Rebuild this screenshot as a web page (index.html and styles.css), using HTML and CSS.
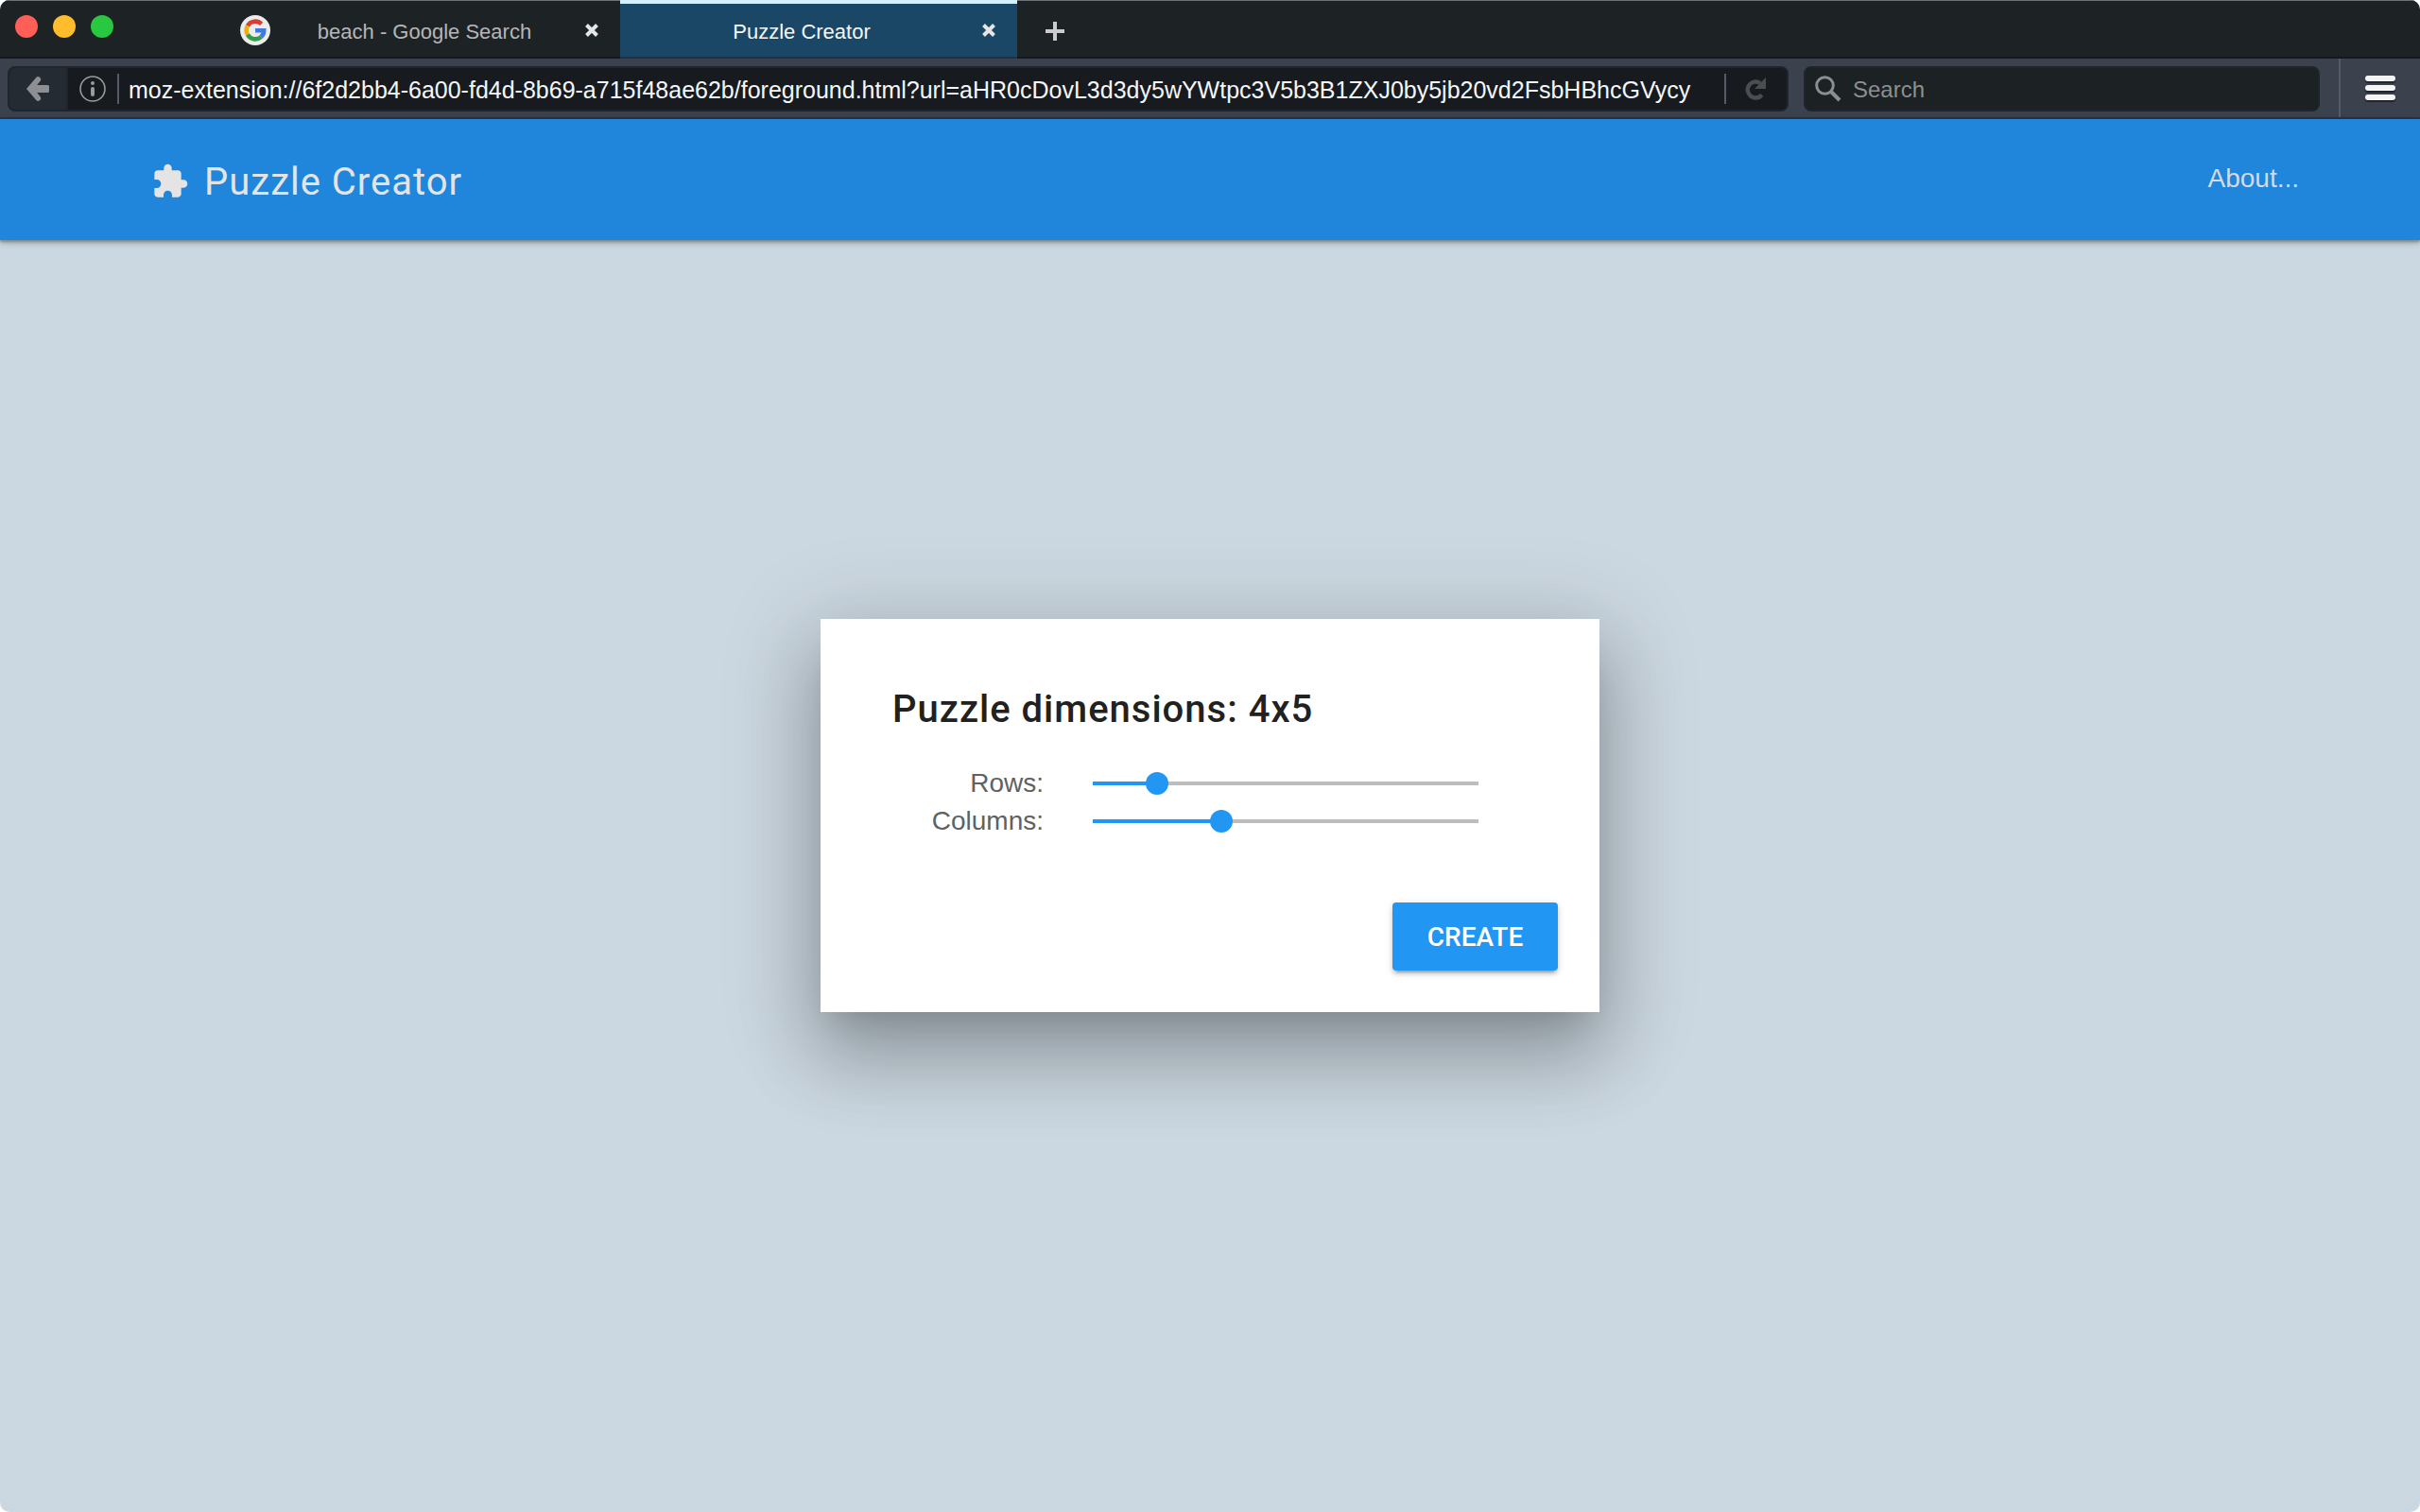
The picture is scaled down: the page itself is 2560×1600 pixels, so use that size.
FILE: index.html
```html
<!DOCTYPE html>
<html lang="en">
<head>
<meta charset="utf-8">
<title>Puzzle Creator</title>
<link rel="stylesheet" href="styles.css">
</head>
<body>
<div class="window">
  <div class="tabbar">
    <div class="lights">
      <button class="light red" aria-label="Close window"></button>
      <button class="light yellow" aria-label="Minimize window"></button>
      <button class="light green" aria-label="Zoom window"></button>
    </div>
    <div class="tab">
      <svg class="favicon" viewBox="0 0 32 32"><circle cx="16" cy="16" r="16" fill="#ececec"/><g fill="none" stroke-width="4.6"><path d="M22.6 9.4A9.4 9.4 0 0 0 7.9 11.3" stroke="#d93f31"/><path d="M7.9 11.3A9.4 9.4 0 0 0 7.9 20.7" stroke="#eab10c"/><path d="M7.9 20.7A9.4 9.4 0 0 0 22 23.2" stroke="#319d4d"/><path d="M22 23.2A9.4 9.4 0 0 0 25.2 16.2H16" stroke="#3f7ae0"/></g></svg>
      <span class="tab-title">beach - Google Search</span>
      <button class="close" aria-label="Close tab"><svg viewBox="0 0 16 16"><path d="M2.500 2.500L13.500 13.500M13.500 2.500L2.500 13.500" fill="none" stroke="currentColor" stroke-width="4"/></svg></button>
    </div>
    <div class="tab active">
      <span class="tab-title">Puzzle Creator</span>
      <button class="close" aria-label="Close tab"><svg viewBox="0 0 16 16"><path d="M2.500 2.500L13.500 13.500M13.500 2.500L2.500 13.500" fill="none" stroke="currentColor" stroke-width="4"/></svg></button>
    </div>
    <button class="newtab" aria-label="New tab"><svg viewBox="0 0 20 20"><path d="M10 0V20M0 10H20" stroke="#c9cbcc" stroke-width="4"/></svg></button>
  </div>
  <div class="toolbar">
    <div class="urlbar">
      <button class="back" aria-label="Back"><svg viewBox="0 0 26 28"><path d="M1 14L11.500 1.800Q13 0.400 15 1.800Q17.200 3.600 15.800 5.600L12.200 10H23.500Q25 10 25 11.500V16.500Q25 18 23.500 18H12.200L15.800 22.400Q17.200 24.400 15 26.200Q13 27.600 11.500 26.200Z" fill="#8d8f93"/></svg></button>
      <svg class="info" viewBox="0 0 28 28"><circle cx="14" cy="14" r="13" fill="none" stroke="#9a9a9a" stroke-width="1.600"/><circle cx="14" cy="8" r="2" fill="#9a9a9a"/><path d="M14 14V20" stroke="#9a9a9a" stroke-width="4" stroke-linecap="round"/></svg>
      <span class="divider"></span>
      <input class="url" type="text" aria-label="Address" value="moz-extension://6f2d2bb4-6a00-fd4d-8b69-a715f48ae62b/foreground.html?url=aHR0cDovL3d3dy5wYWtpc3V5b3B1ZXJ0by5jb20vd2FsbHBhcGVycy">
      <span class="divider"></span>
      <button class="reload" aria-label="Reload"><svg viewBox="0 0 22 24"><path d="M16 6A8.500 8.500 0 1 0 17.800 18.500" fill="none" stroke="#4b4d4f" stroke-width="4.400"/><path d="M22 0V12H10Z" fill="#4b4d4f"/></svg></button>
    </div>
    <div class="searchbar">
      <svg class="glass" viewBox="0 0 28 28"><circle cx="10.500" cy="10.500" r="8.800" fill="none" stroke="#8c8f90" stroke-width="3"/><path d="M17 17L26 26" stroke="#8c8f90" stroke-width="4"/></svg>
      <input class="search" type="text" aria-label="Search" placeholder="Search">
    </div>
    <button class="menu" aria-label="Open menu"><i></i><i></i><i></i></button>
  </div>
  <header class="header">
    <h1 class="brand"><svg viewBox="0 0 24 24"><path fill="#e4e4e4" d="M20.500 11H19V7c0-1.100-.9-2-2-2h-4V3.500C13 2.120 11.880 1 10.500 1S8 2.120 8 3.500V5H4c-1.100 0-1.990.9-1.990 2v3.800H3.500c1.490 0 2.700 1.210 2.700 2.700s-1.210 2.700-2.700 2.700H2V20c0 1.100.9 2 2 2h3.800v-1.500c0-1.490 1.210-2.700 2.700-2.700 1.490 0 2.700 1.210 2.700 2.700V22H17c1.100 0 2-.9 2-2v-4h1.500c1.380 0 2.500-1.120 2.500-2.500S21.880 11 20.500 11z"/></svg>Puzzle Creator</h1>
    <a class="about" href="#about">About...</a>
  </header>
  <main class="stage">
    <form class="dialog">
      <h2 class="dialog-title">Puzzle dimensions: 4x5</h2>
      <div class="fields">
        <label for="rows">Rows:</label>
        <input class="range" id="rows" type="range" min="2" max="14" value="4">
        <label for="columns">Columns:</label>
        <input class="range range-columns" id="columns" type="range" min="2" max="11" value="5">
      </div>
      <div class="actions"><button class="create" type="button">CREATE</button></div>
    </form>
  </main>
</div>
</body>
</html>
```
FILE: styles.css
```css
* { box-sizing: border-box; }
body { margin: 0; background: #fff; font-family: "Liberation Sans", Arial, sans-serif; }
button { padding: 0; border: 0; background: none; color: inherit; font: inherit; }
input { margin: 0; padding: 0; border: 0; outline: 0; background: none; font: inherit; }
svg { display: block; }

.window { display: flex; flex-direction: column; min-height: 100vh; border-radius: 10px; overflow: hidden; background: #ccd8e1; }

.tabbar { display: flex; height: 62px; background: #1d2225; box-shadow: inset 0 1px #6c7374, inset 0 -2px #15191c; }
.lights { display: flex; gap: 16px; width: 236px; padding: 16px; }
.light { width: 24px; height: 24px; border-radius: 50%; }
.red { background: #ff5f57; }
.yellow { background: #ffbd2e; }
.green { background: #28c940; }
.tab { display: grid; grid-template-columns: 32px 1fr 16px; align-items: center; width: 420px; padding: 4px 22px 2px 18px; color: #b5b6b9; font-size: 22px; text-align: center; }
.favicon { width: 32px; height: 32px; }
.tab-title { padding: 4px 6px 0 0; }
.close { width: 16px; height: 16px; color: #e6e6e6; }
.active { grid-template-columns: 1fr 16px; padding-left: 8px; background: #1a4766; box-shadow: inset 0 4px #d2f1fd, inset 0 -2px #16354d; color: #f5f7fa; }
.newtab { align-self: center; width: 20px; height: 20px; margin: 4px 30px 0; }

.toolbar { display: flex; height: 64px; padding: 8px 0 8px 8px; background: #3b424d; box-shadow: inset 0 -2px #2c323c; }
.urlbar, .searchbar { display: flex; align-items: center; height: 48px; border: 2px solid #20252b; border-radius: 8px; background: #171b1f; overflow: hidden; }
.urlbar { flex: 1; }
.back { display: grid; place-items: center; width: 62px; height: 100%; border-right: 2px solid #20252b; background: #252b33; }
.back svg { width: 26px; height: 28px; }
.info { width: 28px; height: 28px; margin: 0 12px; }
.divider { width: 2px; height: 32px; background: #555b66; }
.url { flex: 1; min-width: 0; height: 44px; padding: 2px 0 0 10px; color: #f5f7fa; font-size: 25px; }
.reload { width: 22px; height: 24px; margin: 0 22px 0 20px; }
.searchbar { width: 546px; margin: 0 20px 0 16px; padding-left: 10px; background: #1c2124; }
.glass { width: 28px; height: 28px; }
.search { flex: 1; height: 44px; padding: 2px 0 0 12px; color: #fff; font-size: 24px; }
.search::placeholder { color: #8c8f90; opacity: 1; }
.menu { display: flex; flex-direction: column; align-items: center; justify-content: center; gap: 4px; width: 86px; height: 62px; margin-top: -8px; border-left: 2px solid #555b66; }
.menu i { width: 32px; height: 6px; border-radius: 3px; background: #f4f4f5; box-shadow: 0 2px 1px #20252b; }

.header { display: flex; align-items: center; justify-content: space-between; height: 128px; padding: 0 128px 0 160px; background: #1f86db; box-shadow: 0 4px 4px rgba(0, 0, 0, .14), 0 2px 2px rgba(0, 0, 0, .2), 0 2px 10px rgba(0, 0, 0, .12); color: #e4e4e4; }
.brand { display: flex; align-items: center; gap: 16px; margin: 0; padding-top: 4px; font: 400 40px "Roboto", sans-serif; letter-spacing: 1px; }
.brand svg { width: 40px; height: 40px; }
.about { padding-bottom: 2px; color: #d2dbe6; font-size: 28px; text-decoration: none; }

.stage { flex: 1; display: flex; align-items: center; justify-content: center; padding-bottom: 128px; }
.dialog { width: 824px; padding: 64px 44px 44px 76px; background: #fff; box-shadow: 0 18px 92px 16px rgba(0, 0, 0, .14), 0 22px 30px -14px rgba(0, 0, 0, .12), 0 48px 76px 6px rgba(0, 0, 0, .2); }
.dialog-title { margin: 0; color: #212121; font: 500 40px/64px "Roboto", sans-serif; letter-spacing: 1px; }
.fields { display: grid; grid-template-columns: 160px 408px; column-gap: 52px; align-items: center; margin-top: 26px; color: #616161; font-size: 28px; line-height: 40px; text-align: right; }
/* The thumb's centre travels the full length of the track. */
.range { width: calc(100% + 24px); height: 24px; margin: 0 -12px; appearance: none; background: linear-gradient(to right, #2196f3 17%, #bdbdbd 17%) center / calc(100% - 24px) 4px no-repeat; }
.range-columns { background-image: linear-gradient(to right, #2196f3 33%, #bdbdbd 33%); }
.range::-webkit-slider-thumb { appearance: none; width: 24px; height: 24px; border-radius: 50%; background: #2196f3; }
.actions { display: flex; justify-content: flex-end; margin-top: 66px; }
.create { width: 175px; height: 72px; border-radius: 4px; background: #2196f3; box-shadow: 0 4px 4px rgba(0, 0, 0, .14), 0 6px 2px -4px rgba(0, 0, 0, .2), 0 2px 10px rgba(0, 0, 0, .12); color: #fff; font: 500 28px "Roboto", sans-serif; }
```
